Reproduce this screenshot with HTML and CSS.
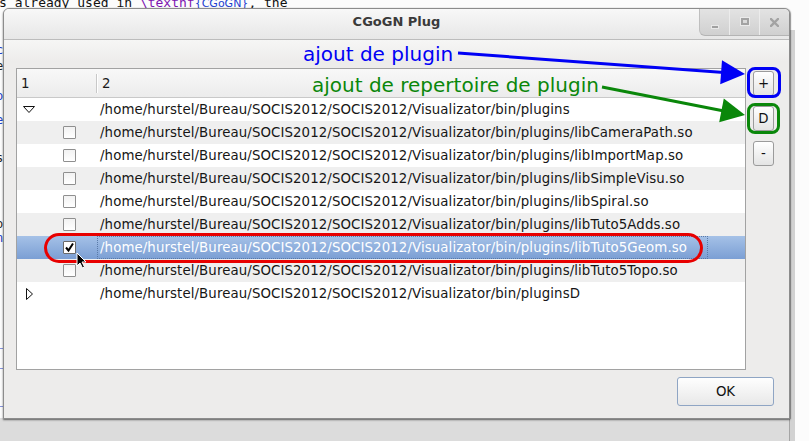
FILE: index.html
```html
<!DOCTYPE html>
<html>
<head>
<meta charset="utf-8">
<link rel="stylesheet" href="styles.css">
</head>
<body>
<div class="desktop">
  <div class="editor-line">s already used in <span class="kw">\texthf</span><span class="arg">{CGoGN}</span>, the</div>
  <div class="edge-strip">
    <span class="frag f-blue" style="top:44px">c</span>
    <span class="frag" style="top:60px">e</span>
    <span class="frag f-blue" style="top:90px">o</span>
    <span class="frag f-blue" style="top:114px">e</span>
    <span class="frag" style="top:152px">s</span>
    <span class="frag" style="top:218px">o</span>
    <span class="frag f-blue" style="top:232px">n</span>
    <span class="frag f-blue" style="top:336px">_</span>
    <span class="frag f-blue" style="top:356px">_</span>
    <span class="frag f-blue" style="top:394px">_</span>
  </div>
  <div class="statusbar"></div>
  <div class="right-strip"></div>

  <div class="window">
    <div class="titlebar">
      <div class="title">CGoGN Plug</div>
      <div class="wm-buttons">
        <span class="wm"><span class="ic-min"></span></span>
        <span class="wm"><span class="ic-max"></span></span>
        <span class="wm"><svg width="9" height="9" viewBox="0 0 9 9"><path d="M1 1 L8 8 M8 1 L1 8" stroke="#a3a3a3" stroke-width="2.4" stroke-linecap="square"/></svg></span>
      </div>
    </div>
    <div class="content">
      <div class="main">
        <div class="tree">
          <div class="tree-header">
            <div class="c1 hcell">1</div>
            <div class="c2 hcell">2</div>
          </div>
          <div class="row">
            <div class="c1 top"><svg width="12" height="7" viewBox="0 0 12 7"><path d="M0.5 0.5 H11.5 L6 6.5 Z" fill="#fff" stroke="#111" stroke-width="1"/></svg></div>
            <div class="c2">/home/hurstel/Bureau/SOCIS2012/SOCIS2012/Visualizator/bin/plugins</div>
          </div>
          <div class="row alt">
            <div class="c1 child"><span class="cb"></span></div>
            <div class="c2">/home/hurstel/Bureau/SOCIS2012/SOCIS2012/Visualizator/bin/plugins/libCameraPath.so</div>
          </div>
          <div class="row">
            <div class="c1 child"><span class="cb"></span></div>
            <div class="c2">/home/hurstel/Bureau/SOCIS2012/SOCIS2012/Visualizator/bin/plugins/libImportMap.so</div>
          </div>
          <div class="row alt">
            <div class="c1 child"><span class="cb"></span></div>
            <div class="c2">/home/hurstel/Bureau/SOCIS2012/SOCIS2012/Visualizator/bin/plugins/libSimpleVisu.so</div>
          </div>
          <div class="row">
            <div class="c1 child"><span class="cb"></span></div>
            <div class="c2">/home/hurstel/Bureau/SOCIS2012/SOCIS2012/Visualizator/bin/plugins/libSpiral.so</div>
          </div>
          <div class="row alt">
            <div class="c1 child"><span class="cb"></span></div>
            <div class="c2">/home/hurstel/Bureau/SOCIS2012/SOCIS2012/Visualizator/bin/plugins/libTuto5Adds.so</div>
          </div>
          <div class="row selected">
            <div class="c1 child"><span class="cb"><svg width="11" height="11" viewBox="0 0 11 11"><path d="M2 5.5 L4.5 8.5 L9 1.5" fill="none" stroke="#000" stroke-width="2"/></svg></span></div>
            <div class="c2"><span class="focus">/home/hurstel/Bureau/SOCIS2012/SOCIS2012/Visualizator/bin/plugins/libTuto5Geom.so</span></div>
          </div>
          <div class="row alt">
            <div class="c1 child"><span class="cb"></span></div>
            <div class="c2">/home/hurstel/Bureau/SOCIS2012/SOCIS2012/Visualizator/bin/plugins/libTuto5Topo.so</div>
          </div>
          <div class="row">
            <div class="c1 top closed"><svg width="7" height="12" viewBox="0 0 7 12"><path d="M0.5 0.5 V11.5 L6.5 6 Z" fill="#fff" stroke="#111" stroke-width="1"/></svg></div>
            <div class="c2">/home/hurstel/Bureau/SOCIS2012/SOCIS2012/Visualizator/bin/pluginsD</div>
          </div>
        </div>
        <div class="side-buttons">
          <button class="btn small">+</button>
          <button class="btn small">D</button>
          <button class="btn small">-</button>
        </div>
      </div>
      <div class="footer">
        <button class="btn ok">OK</button>
      </div>
    </div>
  </div>

  <div class="overlay">
    <span class="note note-blue">ajout de plugin</span>
    <span class="note note-green">ajout de repertoire de plugin</span>
    <svg class="arrows" width="809" height="441" viewBox="0 0 809 441">
      <line x1="458" y1="53" x2="724" y2="72.5" stroke="#0000f5" stroke-width="3"/>
      <polygon points="745,74 720.2,84.2 722,60.3" fill="#0000f5"/>
      <line x1="602" y1="87" x2="724" y2="111" stroke="#0a870a" stroke-width="3"/>
      <polygon points="745,115 719.2,122.2 723.8,98.6" fill="#0a870a"/>
    </svg>
    <div class="mark mark-blue"></div>
    <div class="mark mark-green"></div>
    <div class="mark mark-red"></div>
    <svg class="cursor" width="12" height="17" viewBox="0 0 12 17"><path d="M1 1 V14 L4 11 L6.5 16 L8.5 15 L6 10 L10 10 Z" fill="#000" stroke="#fff" stroke-width="1"/></svg>
  </div>
</div>
</body>
</html>
```

FILE: styles.css
```css
html, body {
  margin: 0;
  padding: 0;
  width: 809px;
  height: 441px;
  overflow: hidden;
  background: #fcfcfc;
  font-family: "DejaVu Sans", "Liberation Sans", sans-serif;
}

.desktop {
  position: relative;
  width: 809px;
  height: 441px;
  overflow: hidden;
}

.editor-line {
  position: absolute;
  left: -1px;
  top: -5px;
  font-family: "DejaVu Sans Mono", monospace;
  font-size: 13px;
  line-height: 15px;
  color: #111;
  white-space: pre;
}
.editor-line .kw { color: #7d15b0; }
.editor-line .arg { color: #1d3fd0; font-family: "DejaVu Sans", sans-serif; font-size: 11px; }

.edge-strip {
  position: absolute;
  left: 0;
  top: 0;
  width: 4px;
  height: 441px;
  overflow: hidden;
}
.frag {
  position: absolute;
  left: -4px;
  font-family: "DejaVu Sans Mono", monospace;
  font-size: 12px;
  line-height: 12px;
  color: #222;
}
.frag.f-blue { color: #2040c8; }

.statusbar {
  position: absolute;
  left: 0;
  bottom: 0;
  width: 789px;
  height: 23px;
  background: #dcdcdc;
}
.right-strip {
  position: absolute;
  left: 789px;
  top: 30px;
  width: 5px;
  height: 411px;
  background: #d2d2d2;
  border-left: 1px solid #a5a5a5;
}

.window {
  position: absolute;
  left: 3px;
  top: 8px;
  width: 785px;
  height: 409px;
  border: 1px solid #8c8c8c;
  border-radius: 6px 6px 0 0;
  box-shadow: 0 1px 2px rgba(0,0,0,0.55), 1px 0 1px rgba(0,0,0,0.3);
  display: flex;
  flex-direction: column;
  background: #edeceb;
  overflow: hidden;
}

.titlebar {
  height: 30px;
  flex: none;
  display: grid;
  grid-template-columns: 1fr auto 1fr;
  align-items: start;
  background: linear-gradient(#f8f8f8, #e7e7e7);
  border-bottom: 1px solid #bcbcbc;
}
.title {
  grid-column: 2;
  font-weight: bold;
  font-size: 13px;
  color: #3a3a3a;
  line-height: 26px;
}
.wm-buttons {
  grid-column: 3;
  justify-self: end;
  display: flex;
  height: 26px;
  background: linear-gradient(#e3e3e3, #d0d0d0);
  border-left: 1px solid #bfbfbf;
  border-bottom: 1px solid #b4b4b4;
  border-bottom-left-radius: 6px;
}
.wm {
  width: 29px;
  height: 26px;
  display: flex;
  align-items: center;
  justify-content: center;
  border-left: 1px solid #ececec;
}
.wm:first-child { border-left: none; }
.ic-min {
  width: 6px;
  height: 2px;
  margin-top: 9px;
  background: #a0a0a0;
  box-shadow: 0 0 0 1px #e8e8e8;
}
.ic-max {
  width: 4px;
  height: 3px;
  border: 2px solid #a3a3a3;
  box-shadow: 0 0 0 1px #ebebeb;
  margin-top: -1px;
}

.content {
  flex: 1;
  display: flex;
  flex-direction: column;
  padding: 28px 15px 12px 12px;
  background: linear-gradient(#f6f6f5, #edeceb 22px);
}
.main {
  display: flex;
  gap: 7px;
  flex: none;
}
.tree {
  width: 728px;
  height: 300px;
  border: 1px solid #a2a2a2;
  background: #fff;
  font-size: 13.33px;
  letter-spacing: 0.1px;
  color: #161616;
  overflow: hidden;
}
.tree-header {
  display: flex;
  height: 28px;
  border-bottom: 1px solid #c9c9c9;
  background: linear-gradient(#f8f8f8, #ececec);
}
.hcell {
  display: flex;
  align-items: center;
  position: relative;
  color: #1a1a1a;
}
.tree-header .c1 { padding-left: 4px; }
.tree-header .c1::after {
  content: "";
  position: absolute;
  right: 0;
  top: 5px;
  bottom: 4px;
  width: 1px;
  background: #c8c8c8;
  box-shadow: 1px 0 0 #fff;
}
.c1 {
  width: 80px;
  box-sizing: border-box;
  flex: none;
  display: flex;
  align-items: center;
}
.c2 {
  flex: 1;
  padding-left: 3px;
  display: flex;
  align-items: center;
  white-space: nowrap;
}
.tree-header .c2 { padding-left: 5px; }

.row {
  display: flex;
  height: 23px;
}
.row.alt { background: #efefef; }
.row.selected {
  background: linear-gradient(#a5c1e7, #7b9fd4);
  color: #fff;
}
.c1.top { padding-left: 6px; }
.c1.closed { padding-left: 9px; }
.c1.child { padding-left: 46px; }
.cb {
  width: 11px;
  height: 11px;
  border: 1px solid #8f8f8f;
  border-radius: 1px;
  background: linear-gradient(#f2f2f2, #fff);
  display: flex;
  align-items: center;
  justify-content: center;
}
.row.selected .cb { background: #fff; border-color: #6a6a6a; }
.row.selected .c2 { padding-left: 0; }
.focus {
  display: flex;
  align-items: center;
  height: 21px;
  padding-left: 2px;
  padding-right: 20px;
  border: 1px dotted #5a7aa8;
}

.side-buttons {
  display: flex;
  flex-direction: column;
  gap: 10px;
  padding-top: 3px;
}
.btn {
  font-family: "DejaVu Sans", sans-serif;
  font-size: 13.33px;
  color: #111;
  border: 1px solid #9b9b9b;
  border-radius: 3px;
  background: linear-gradient(#ffffff, #e4e4e4);
  padding: 0;
  margin: 0;
}
.btn.small {
  width: 21px;
  height: 25px;
}
.footer {
  display: flex;
  justify-content: flex-end;
  padding-top: 7px;
}
.btn.ok {
  width: 97px;
  height: 29px;
  border-color: #8fa5c4;
  background: linear-gradient(#fefefe, #e8e8e8);
}

.overlay {
  position: absolute;
  left: 0;
  top: 0;
  width: 809px;
  height: 441px;
  pointer-events: none;
}
.arrows {
  position: absolute;
  left: 0;
  top: 0;
}
.note {
  position: absolute;
  font-size: 20px;
  line-height: 24px;
  white-space: nowrap;
}
.note-blue { left: 303px; top: 42px; color: #0000f5; }
.note-green { left: 312px; top: 73px; color: #0a870a; }
.mark {
  position: absolute;
  box-sizing: border-box;
  border-width: 3px;
  border-style: solid;
}
.mark-blue {
  left: 747px; top: 67px; width: 34px; height: 31px;
  border-color: #0000f5;
  border-radius: 8px;
}
.mark-green {
  left: 747px; top: 103px; width: 33px; height: 31px;
  border-color: #0a870a;
  border-radius: 8px;
}
.mark-red {
  left: 44px; top: 233px; width: 659px; height: 30px;
  border-color: #e80000;
  border-radius: 15px;
}
.cursor {
  position: absolute;
  left: 76px;
  top: 252px;
}
```
